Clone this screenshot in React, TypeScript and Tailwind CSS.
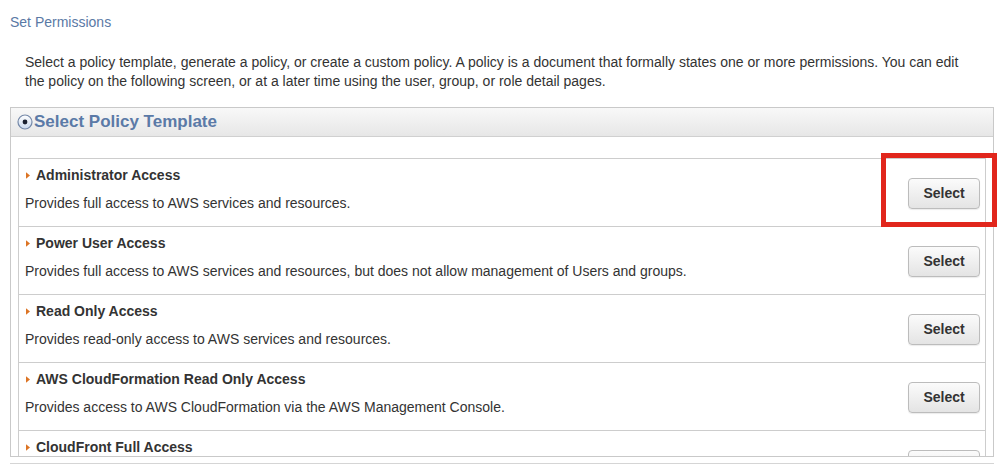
const policies = [
  { name: 'Administrator Access', desc: 'Provides full access to AWS services and resources.' },
  {
    name: 'Power User Access',
    desc: 'Provides full access to AWS services and resources, but does not allow management of Users and groups.',
  },
  { name: 'Read Only Access', desc: 'Provides read-only access to AWS services and resources.' },
  {
    name: 'AWS CloudFormation Read Only Access',
    desc: 'Provides access to AWS CloudFormation via the AWS Management Console.',
  },
  { name: 'CloudFront Full Access', desc: 'Provides full access to the CloudFront console.' },
]

function RadioIcon() {
  return (
    <svg width="16" height="16" viewBox="0 0 16 16" className="shrink-0">
      <defs>
        <linearGradient id="rg" x1="0" y1="0" x2="0" y2="1">
          <stop offset="0" stopColor="#ffffff" />
          <stop offset="1" stopColor="#c9d8ee" />
        </linearGradient>
      </defs>
      <circle cx="8" cy="8" r="7" fill="url(#rg)" stroke="#7488a8" strokeWidth="1.2" />
      <circle cx="8" cy="8" r="2.4" fill="#1a2030" />
    </svg>
  )
}

function Arrow() {
  return (
    <svg width="6" height="9" viewBox="0 0 6 9" className="shrink-0">
      <path d="M1 1.2 L5 4.5 L1 7.8 Z" fill="#dc7424" />
    </svg>
  )
}

function PolicyRow({ name, desc }: { name: string; desc: string }) {
  return (
    <div className="h-[68px] shrink-0 border-b border-[#cdcdcd] flex items-center justify-between pl-[6px] pr-[5px]">
      <div className="self-start pt-[8px]">
        <div className="flex items-center gap-[5px] text-[14px] leading-[17px] font-bold text-[#333]">
          <Arrow />
          <span>{name}</span>
        </div>
        <div className="mt-[11px] text-[14px] leading-[17px] text-[#333]">{desc}</div>
      </div>
      <button className="mt-[1px] w-[72px] h-[31px] rounded-[4px] border border-[#bcbcbc] bg-gradient-to-b from-[#fbfbfb] to-[#e4e4e4] text-[14px] font-bold text-[#333] shadow-[0_1px_1px_rgba(0,0,0,0.08)]">
        Select
      </button>
    </div>
  )
}

export default function App() {
  return (
    <div
      className="relative w-[1008px] h-[465px] overflow-hidden bg-white"
      style={{ fontFamily: '"Liberation Sans", Arial, sans-serif' }}
    >
      <div className="pl-[10px] pt-[14px] text-[14px] leading-[16px] text-[#5a79a5]">Set Permissions</div>

      <p className="ml-[25px] mt-[23px] text-[14px] leading-[19px] text-[#333]">
        Select a policy template, generate a policy, or create a custom policy. A policy is a document that formally
        states one or more permissions. You can edit
        <br />
        the policy on the following screen, or at a later time using the user, group, or role detail pages.
      </p>

      <div className="ml-[10px] mt-[16px] w-[984px] h-[350px] border border-[#c9c9c9] flex flex-col overflow-hidden">
        <div className="h-[29px] shrink-0 border-b border-[#d0d0d0] bg-gradient-to-b from-[#f8f8f8] to-[#e7e7e7] flex items-center gap-[1px] pl-[6px]">
          <RadioIcon />
          <span className="text-[17px] leading-[20px] font-bold text-[#5b7aa7]">Select Policy Template</span>
        </div>
        <div className="flex-1 overflow-hidden pt-[21px] px-[7px]">
          <div className="h-full border-x border-t border-[#cdcdcd] flex flex-col overflow-hidden">
            {policies.map((p) => (
              <PolicyRow key={p.name} name={p.name} desc={p.desc} />
            ))}
          </div>
        </div>
      </div>
      <div className="ml-[10px] mt-[6px] w-[984px] border-t border-[#d5d5d5]" />

      <div className="absolute left-[881px] top-[153px] w-[116px] h-[74px] border-[5px] border-[#e1261c]" />
    </div>
  )
}
